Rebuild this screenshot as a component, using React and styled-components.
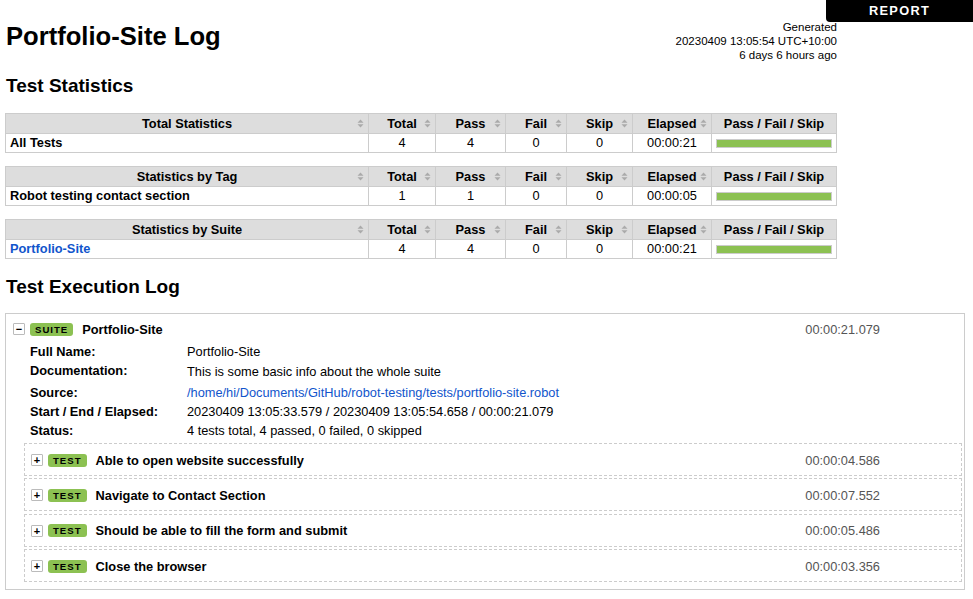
import React from 'react';
import styled, { createGlobalStyle } from 'styled-components';

const PASS = '#8cc152';

const GlobalStyle = createGlobalStyle`
  html, body {
    margin: 0;
    background: #fff;
  }
  body {
    padding: 0 8px 6px 5px;
    font-family: "Liberation Sans", Helvetica, Arial, sans-serif;
    font-size: 12.8px;
    color: #000;
  }
`;

const ReportLink = styled.a`
  position: fixed;
  top: 0;
  right: 0;
  width: 147px;
  height: 22px;
  line-height: 22px;
  background: #000;
  color: #fff;
  text-align: center;
  font-weight: bold;
  font-size: 12.8px;
  letter-spacing: 1.3px;
  text-decoration: none;
  border-bottom-left-radius: 4px;
`;

const Page = styled.div`
  display: flex;
  flex-direction: column;
`;

const Header = styled.header`
  display: flex;
  justify-content: space-between;
  align-items: flex-start;
  width: 832px;
  padding-top: 20px;
`;

const Title = styled.h1`
  margin: 2px 0 0 1px;
  font-size: 25.6px;
  line-height: 28px;
  font-weight: bold;
`;

const Generated = styled.div`
  text-align: right;
  font-size: 11.5px;
  line-height: 14px;
  white-space: nowrap;
`;

const SectionTitle = styled.h2`
  margin: ${p => p.$top}px 0 ${p => p.$bottom}px 1px;
  font-size: 19px;
  line-height: 22px;
  font-weight: bold;
`;

const StatsList = styled.div`
  display: flex;
  flex-direction: column;
  gap: 13px;
`;

const StatsTable = styled.table`
  width: 832px;
  border-collapse: collapse;
  table-layout: fixed;
`;

const Th = styled.th`
  background: #ddd;
  border: 1px solid #ccc;
  padding: 2px 4px;
  font-weight: bold;
  line-height: 15px;
  white-space: nowrap;
`;

const HeadInner = styled.div`
  display: grid;
  grid-template-columns: 8px 1fr 8px;
  align-items: center;
`;

const HeadText = styled.span`
  grid-column: 2;
  text-align: center;
`;

const Td = styled.td`
  border: 1px solid #ccc;
  padding: 2px 4px;
  line-height: 14px;
  text-align: ${p => (p.$name ? 'left' : 'center')};
  font-weight: ${p => (p.$name ? 'bold' : 'normal')};
  vertical-align: middle;
  white-space: nowrap;
`;

const NameLink = styled.a`
  color: #15c;
  text-decoration: none;
`;

const Bar = styled.div`
  height: 7px;
  border: 1px solid #ccc;
  background: ${PASS};
`;

const SortIcon = () => (
  <svg width="7" height="9" viewBox="0 0 7 9" style={{ gridColumn: 3, justifySelf: 'end' }}>
    <polygon points="0.5,3.8 3.5,0.6 6.5,3.8" fill="#aaa" />
    <polygon points="0.5,5.2 3.5,8.4 6.5,5.2" fill="#aaa" />
  </svg>
);

const SuiteBox = styled.div`
  border: 1px solid #ccc;
  padding: 8px 2px 7px 7px;
`;

const ElementHeader = styled.div`
  display: flex;
  align-items: center;
  height: 14px;
  padding-right: ${p => p.$right}px;
`;

const Toggle = styled.span`
  display: flex;
  align-items: center;
  justify-content: center;
  box-sizing: border-box;
  width: 12px;
  height: 12px;
  border: 1px solid #bbb;
  border-radius: 1px;
  font-size: 11px;
  font-weight: bold;
  line-height: 10px;
  margin-right: 5px;
`;

const Badge = styled.span`
  display: inline-block;
  padding: 0 5px;
  font-size: 9.6px;
  font-weight: bold;
  letter-spacing: 1px;
  line-height: 13px;
  border-radius: 3px;
  background: ${PASS};
  color: #000;
  margin-right: 9px;
`;

const ElementName = styled.span`
  font-weight: bold;
`;

const Elapsed = styled.span`
  margin-left: auto;
  color: #555;
`;

const MetaTable = styled.div`
  display: grid;
  grid-template-columns: 157px 1fr;
  margin: 6px 0 0 17px;
`;

const MetaLabel = styled.div`
  font-weight: bold;
  line-height: 19px;
  height: ${p => (p.$tall ? 22 : 19)}px;
`;

const MetaValue = styled.div`
  line-height: 19px;
  height: ${p => (p.$tall ? 22 : 19)}px;
  padding-top: ${p => (p.$tall ? 1 : 0)}px;
  box-sizing: border-box;
`;

const SourceLink = styled.a`
  color: #15c;
  text-decoration: none;
`;

const Tests = styled.div`
  display: flex;
  flex-direction: column;
  gap: 2.4px;
  margin: 3px 0 0 11px;
`;

const TestBox = styled.div`
  border: 1px dashed #ccc;
  padding: 9px 0 8px 6px;
`;

const columns = [
  { key: 'Total', width: 67 },
  { key: 'Pass', width: 70 },
  { key: 'Fail', width: 61 },
  { key: 'Skip', width: 66 },
  { key: 'Elapsed', width: 79 },
];

const stats = [
  { title: 'Total Statistics', name: 'All Tests', values: ['4', '4', '0', '0', '00:00:21'] },
  { title: 'Statistics by Tag', name: 'Robot testing contact section', values: ['1', '1', '0', '0', '00:00:05'] },
  { title: 'Statistics by Suite', name: 'Portfolio-Site', link: true, values: ['4', '4', '0', '0', '00:00:21'] },
];

const meta = [
  ['Full Name:', 'Portfolio-Site'],
  ['Documentation:', 'This is some basic info about the whole suite', 'tall'],
  ['Source:', '/home/hi/Documents/GitHub/robot-testing/tests/portfolio-site.robot', 'link'],
  ['Start / End / Elapsed:', '20230409 13:05:33.579 / 20230409 13:05:54.658 / 00:00:21.079'],
  ['Status:', '4 tests total, 4 passed, 0 failed, 0 skipped'],
];

const tests = [
  ['Able to open website successfully', '00:00:04.586'],
  ['Navigate to Contact Section', '00:00:07.552'],
  ['Should be able to fill the form and submit', '00:00:05.486'],
  ['Close the browser', '00:00:03.356'],
];

const StatTable = ({ data }) => (
  <StatsTable>
    <colgroup>
      <col />
      {columns.map(c => <col key={c.key} style={{ width: c.width }} />)}
      <col style={{ width: 125 }} />
    </colgroup>
    <thead>
      <tr>
        <Th>
          <HeadInner><HeadText>{data.title}</HeadText><SortIcon /></HeadInner>
        </Th>
        {columns.map(c => (
          <Th key={c.key}>
            <HeadInner><HeadText>{c.key}</HeadText><SortIcon /></HeadInner>
          </Th>
        ))}
        <Th>Pass / Fail / Skip</Th>
      </tr>
    </thead>
    <tbody>
      <tr>
        <Td $name>{data.link ? <NameLink href="#">{data.name}</NameLink> : data.name}</Td>
        {data.values.map((v, i) => <Td key={i}>{v}</Td>)}
        <Td><Bar /></Td>
      </tr>
    </tbody>
  </StatsTable>
);

export default function App() {
  return (
    <>
      <GlobalStyle />
      <ReportLink href="#">REPORT</ReportLink>
      <Page>
        <Header>
          <Title>Portfolio-Site Log</Title>
          <Generated>
            Generated<br />
            20230409 13:05:54 UTC+10:00<br />
            6 days 6 hours ago
          </Generated>
        </Header>

        <SectionTitle $top={13} $bottom={16}>Test Statistics</SectionTitle>
        <StatsList>
          {stats.map(s => <StatTable key={s.title} data={s} />)}
        </StatsList>

        <SectionTitle $top={17} $bottom={15}>Test Execution Log</SectionTitle>
        <SuiteBox>
          <ElementHeader $right={82}>
            <Toggle>−</Toggle>
            <Badge>SUITE</Badge>
            <ElementName>Portfolio-Site</ElementName>
            <Elapsed>00:00:21.079</Elapsed>
          </ElementHeader>
          <MetaTable>
            {meta.map(([label, value, kind]) => (
              <React.Fragment key={label}>
                <MetaLabel $tall={kind === 'tall'}>{label}</MetaLabel>
                <MetaValue $tall={kind === 'tall'}>
                  {kind === 'link' ? <SourceLink href="#">{value}</SourceLink> : value}
                </MetaValue>
              </React.Fragment>
            ))}
          </MetaTable>
          <Tests>
            {tests.map(([name, time]) => (
              <TestBox key={name}>
                <ElementHeader $right={81}>
                  <Toggle>+</Toggle>
                  <Badge>TEST</Badge>
                  <ElementName>{name}</ElementName>
                  <Elapsed>{time}</Elapsed>
                </ElementHeader>
              </TestBox>
            ))}
          </Tests>
        </SuiteBox>
      </Page>
    </>
  );
}
